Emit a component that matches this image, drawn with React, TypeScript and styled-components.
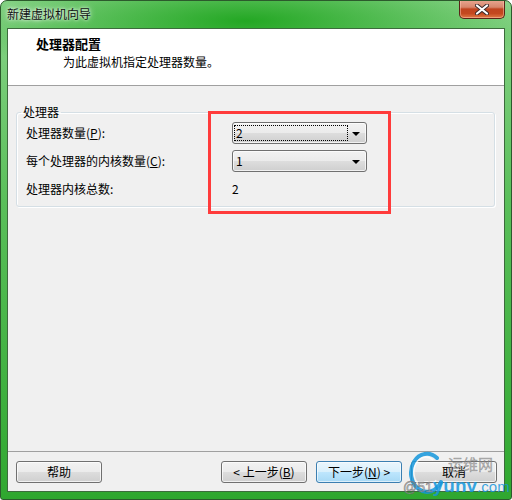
import React from "react";
import styled, { createGlobalStyle } from "styled-components";

const Global = createGlobalStyle`
  html, body { margin: 0; padding: 0; background: #ffffff; }
  body { font-family: "Noto Sans CJK SC", "Microsoft YaHei", sans-serif; font-size: 12px; color: #000; }
  * { box-sizing: border-box; }
`;

const Frame = styled.div`
  position: relative;
  width: 512px;
  height: 500px;
  display: flex;
  flex-direction: column;
  border: 1px solid #2c5a2c;
  border-radius: 7px 7px 3px 3px;
  overflow: hidden;
  background:
    radial-gradient(ellipse 300px 60px at 48% 20px, rgba(30, 165, 30, 0.95), rgba(30, 165, 30, 0) 100%),
    linear-gradient(to bottom, #93d893 0px, #7fcf7f 40px, #5abf5a 200px, #3bae3b 420px, #2fa72f 500px);
`;

const TitleBar = styled.div`
  height: 27px;
  display: flex;
  justify-content: space-between;
  align-items: flex-start;
  padding-left: 6px;
`;

const TitleText = styled.span`
  margin-top: 5px;
  line-height: 16px;
  font-size: 12px;
  color: #111;
  text-shadow: 0 0 6px rgba(255, 255, 255, 0.9), 0 0 3px rgba(255, 255, 255, 0.9);
`;

const CloseButton = styled.div`
  width: 46px;
  height: 19px;
  margin-top: -1px;
  margin-right: 6px;
  border: 1px solid #5a2418;
  border-top: none;
  border-radius: 0 0 5px 5px;
  background: linear-gradient(to bottom, #e9a792 0%, #d7866c 40%, #c0441f 50%, #c4481f 75%, #e07a44 100%);
  box-shadow: inset 0 0 0 1px rgba(255, 200, 180, 0.5);
  display: flex;
  align-items: center;
  justify-content: center;
`;

const Client = styled.div`
  flex: 1;
  margin: 0 6px 7px 6px;
  border: 1px solid #3d6b3d;
  background: #f0f0f0;
  display: flex;
  flex-direction: column;
`;

const Header = styled.div`
  height: 57px;
  background: #ffffff;
  border-bottom: 1px solid #a0a0a0;
  padding: 7px 0 0 28px;
  display: flex;
  flex-direction: column;
`;

const HeaderTitle = styled.div`
  font-weight: bold;
  font-size: 13px;
  line-height: 16px;
`;

const HeaderSub = styled.div`
  margin-left: 27px;
  line-height: 18px;
  margin-top: 1px;
`;

const Body = styled.div`
  flex: 1;
  padding: 19px 9px 0 8px;
  position: relative;
`;

const Group = styled.fieldset`
  margin: 0;
  padding: 0 9px 3px 9px;
  border: 1px solid #d5dfe5;
  border-radius: 3px;
  box-shadow: inset 1px 1px 0 #fff, 1px 1px 0 #fff;
`;

const Legend = styled.legend`
  margin-left: -5px;
  padding: 0 2px;
  line-height: 14px;
  font-size: 12px;
`;

const Row = styled.div`
  height: 28px;
  display: grid;
  grid-template-columns: 206px 135px;
  align-items: center;
`;

const Label = styled.span`
  line-height: 16px;
`;

const Value = styled.span`
  line-height: 16px;
  color: #000;
`;

const Combo = styled.div`
  width: 135px;
  height: 22px;
  border: 1px solid #707070;
  border-radius: 3px;
  background: linear-gradient(to bottom, #f2f2f2 0%, #ebebeb 50%, #dddddd 51%, #cfcfcf 100%);
  box-shadow: inset 0 0 0 1px rgba(255, 255, 255, 0.7);
  display: flex;
  align-items: center;
  padding: 1px 6px 1px 1px;
  gap: 4px;
`;

const ComboText = styled.span<{ $focused?: boolean }>`
  flex: 1;
  height: 16px;
  line-height: 16px;
  padding-left: 2px;
  outline: ${(p) => (p.$focused ? "1px dotted #000" : "none")};
  outline-offset: -1px;
`;

const Arrow = styled.span`
  width: 0;
  height: 0;
  border-left: 4px solid transparent;
  border-right: 4px solid transparent;
  border-top: 4px solid #000;
  margin-top: 1px;
`;

const Highlight = styled.div`
  position: absolute;
  left: 200px;
  top: 25px;
  width: 183px;
  height: 103px;
  border: 3px solid #ff3b3b;
  pointer-events: none;
`;

const Footer = styled.div`
  border-top: 1px solid #a0a0a0;
  padding: 9px 7px 8px 8px;
  display: flex;
  align-items: center;
  position: relative;
`;

const Spacer = styled.div`
  flex: 1;
`;

const Button = styled.div<{ $default?: boolean; $gap?: number }>`
  width: 86px;
  height: 22px;
  margin-left: ${(p) => p.$gap ?? 0}px;
  border: 1px solid ${(p) => (p.$default ? "#3c7fb1" : "#707070")};
  border-radius: 3px;
  background: ${(p) =>
    p.$default
      ? "linear-gradient(to bottom, #eaf6fd 0%, #d9f0fc 50%, #bee6fd 51%, #a7d9f5 100%)"
      : "linear-gradient(to bottom, #f2f2f2 0%, #ebebeb 50%, #dddddd 51%, #cfcfcf 100%)"};
  box-shadow: inset 0 0 0 1px ${(p) => (p.$default ? "rgba(255,255,255,0.6)" : "rgba(255,255,255,0.7)")};
  display: flex;
  align-items: center;
  justify-content: center;
  line-height: 16px;
  font-size: 12px;
`;

const U = styled.span`
  text-decoration: underline;
`;

const Watermark = styled.div`
  position: absolute;
  right: -7px;
  top: -1px;
  width: 109px;
  height: 48px;
  pointer-events: none;
`;

const WmRing = styled.svg`
  position: absolute;
  left: 4px;
  top: -2px;
`;

const WmCn = styled.span`
  position: absolute;
  left: 46px;
  top: 5px;
  font-size: 15px;
  line-height: 16px;
  color: rgba(150, 150, 150, 0.7);
  -webkit-text-stroke: 0.3px rgba(90, 90, 90, 0.6);
`;

const WmDomain = styled.div`
  position: absolute;
  left: 1px;
  top: 27px;
  display: flex;
  align-items: baseline;
  line-height: 16px;
  white-space: nowrap;
`;

const WmGray = styled.span`
  font-family: "Liberation Sans", Arial, sans-serif;
  font-size: 14px;
  color: rgba(200, 200, 200, 0.6);
  -webkit-text-stroke: 0.6px rgba(90, 90, 90, 0.7);
`;

const WmBlue = styled.span<{ $bold?: boolean }>`
  font-family: "Liberation Sans", Arial, sans-serif;
  font-size: ${(p) => (p.$bold ? 19 : 15)}px;
  font-weight: ${(p) => (p.$bold ? "bold" : "normal")};
  color: rgba(20, 150, 220, 0.85);
`;

export default function App() {
  return (
    <>
      <Global />
      <Frame>
        <TitleBar>
          <TitleText>新建虚拟机向导</TitleText>
          <CloseButton>
            <svg width="14" height="11" viewBox="0 0 14 11">
              <path d="M2 1.5 L12 9.5 M12 1.5 L2 9.5" stroke="#3a2a2a" strokeWidth="4" strokeLinecap="round" />
              <path d="M2 1.5 L12 9.5 M12 1.5 L2 9.5" stroke="#ffffff" strokeWidth="2.2" strokeLinecap="round" />
            </svg>
          </CloseButton>
        </TitleBar>
        <Client>
          <Header>
            <HeaderTitle>处理器配置</HeaderTitle>
            <HeaderSub>为此虚拟机指定处理器数量。</HeaderSub>
          </Header>
          <Body>
            <Group>
              <Legend>处理器</Legend>
              <Row>
                <Label>
                  处理器数量(<U>P</U>):
                </Label>
                <Combo>
                  <ComboText $focused>2</ComboText>
                  <Arrow />
                </Combo>
              </Row>
              <Row>
                <Label>
                  每个处理器的内核数量(<U>C</U>):
                </Label>
                <Combo>
                  <ComboText>1</ComboText>
                  <Arrow />
                </Combo>
              </Row>
              <Row>
                <Label>处理器内核总数:</Label>
                <Value>2</Value>
              </Row>
            </Group>
            <Highlight />
          </Body>
          <Footer>
            <Button>帮助</Button>
            <Spacer />
            <Button>
              &lt; 上一步(<U>B</U>)
            </Button>
            <Button $default $gap={9}>
              下一步(<U>N</U>) &gt;
            </Button>
            <Button $gap={9}>取消</Button>
            <Watermark>
              <WmRing width="40" height="46" viewBox="0 0 40 46">
                <path
                  d="M31 9 A16 19 0 1 0 35 33"
                  fill="none"
                  stroke="rgba(20,150,220,0.85)"
                  strokeWidth="4"
                  strokeLinecap="round"
                />
                <path
                  d="M27 11 A12 15 0 1 0 30 31"
                  fill="none"
                  stroke="rgba(255,255,255,0.75)"
                  strokeWidth="1.5"
                />
              </WmRing>
              <WmCn>运维网</WmCn>
              <WmDomain>
                <WmGray>@51</WmGray>
                <WmBlue $bold>yunv</WmBlue>
                <WmBlue>.com</WmBlue>
              </WmDomain>
            </Watermark>
          </Footer>
        </Client>
      </Frame>
    </>
  );
}
